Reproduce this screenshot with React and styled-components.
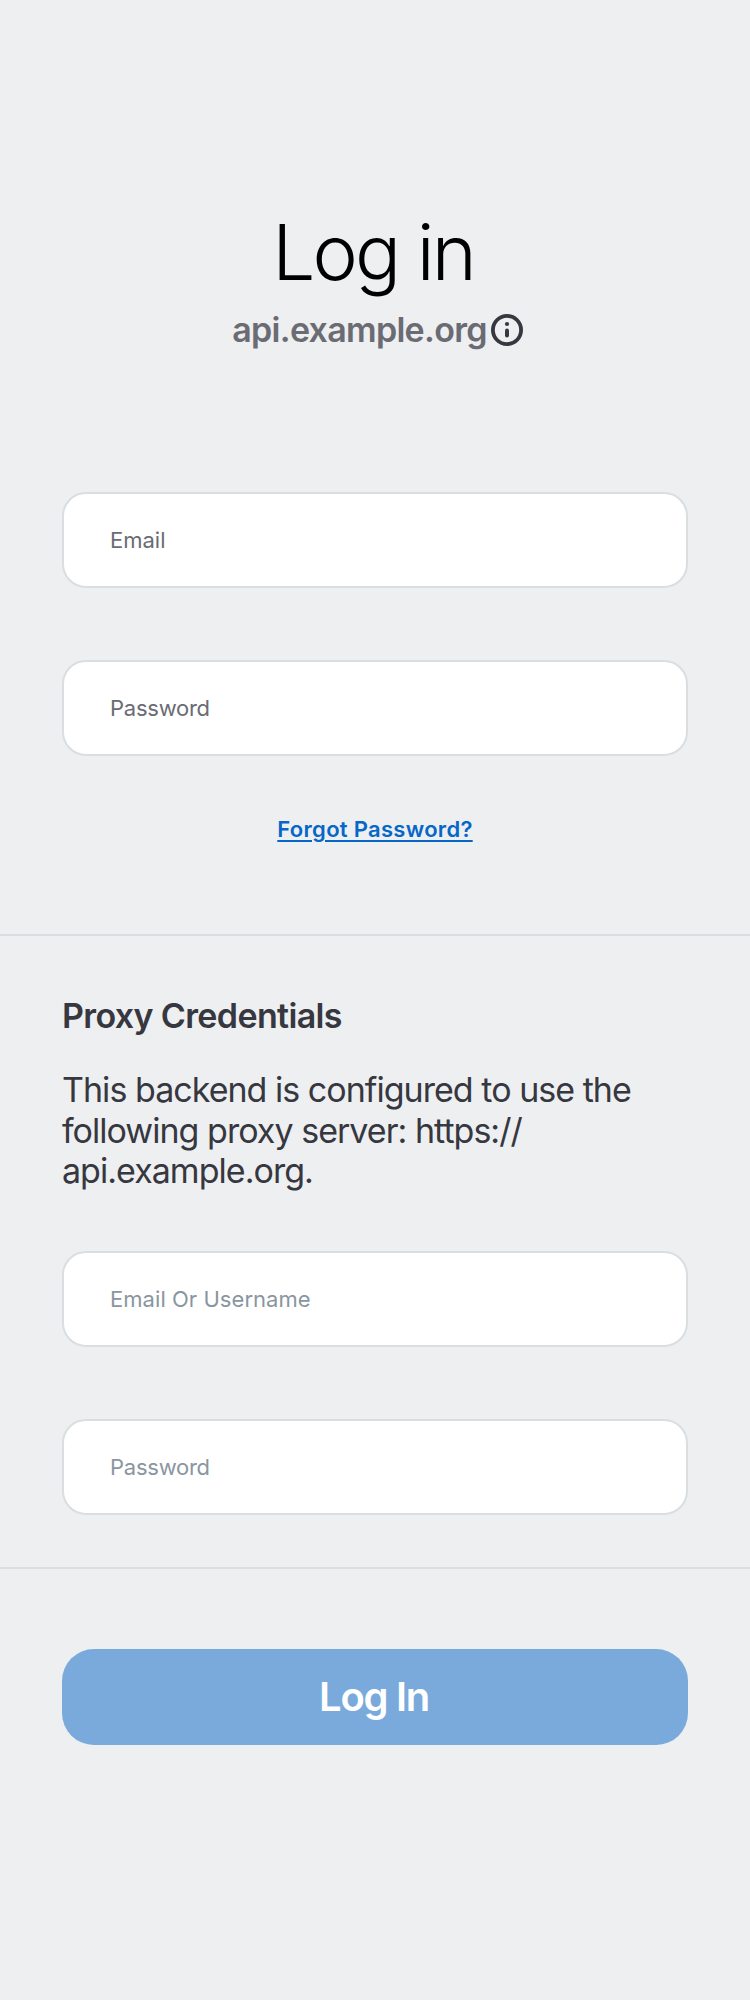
import React from "react";
import styled, { createGlobalStyle } from "styled-components";

const Global = createGlobalStyle`
  * { box-sizing: border-box; }
  body { margin: 0; background: #edeff1; font-family: Inter, "Liberation Sans", sans-serif; }
`;

const Page = styled.main`
  display: flex;
  flex-direction: column;
  height: 2000px;
  background: #edeff1;
`;
const Header = styled.header`
  display: flex;
  flex-direction: column;
  align-items: center;
  padding-top: 206px;
  height: 492px;
`;
const Title = styled.h1`
  margin: 0;
  padding-right: 4px;
  font-size: 76.5px;
  line-height: 92px;
  font-weight: 300;
  letter-spacing: -2.9px;
  color: #000;
`;
const Server = styled.div`
  display: flex;
  align-items: center;
  gap: 4px;
  height: 40px;
  margin: 12px 0 0 5px;
`;
const ServerName = styled.span`
  font-size: 34px;
  line-height: 40px;
  font-weight: 600;
  letter-spacing: -0.7px;
  color: #6a6b73;
  white-space: nowrap;
`;
const Fields = styled.section`
  display: flex;
  flex-direction: column;
  gap: 72px;
  padding: 0 62px;
`;
const Input = styled.input`
  display: block;
  width: 100%;
  height: 96px;
  padding: 0 46px;
  border: 2px solid #dadee1;
  border-radius: 24px;
  background: #fff;
  outline: none;
  font: 400 22px/28px Inter, sans-serif;
  letter-spacing: ${(p) => p.$tracking || "0"};
  &::placeholder { color: ${(p) => p.$tone}; opacity: 1; }
`;
const Forgot = styled.a`
  align-self: center;
  margin-top: 59px;
  font-size: 22px;
  line-height: 28px;
  font-weight: 600;
  letter-spacing: 0.3px;
  color: #0667c8;
  text-decoration: underline;
  text-decoration-thickness: 2px;
  text-underline-offset: 3px;
  white-space: nowrap;
`;
const Proxy = styled.section`
  margin-top: 91px;
  height: 635px;
  border-top: 2px solid #dadee0;
  border-bottom: 2px solid #dadee0;
`;
const Heading = styled.h2`
  margin: 60px 62px 0;
  font-size: 34px;
  line-height: 40px;
  font-weight: 600;
  letter-spacing: -0.63px;
  color: #36373f;
`;
const Copy = styled.p`
  margin: 34px 62px 59.5px;
  font-size: 34px;
  line-height: 40.5px;
  letter-spacing: -0.97px;
  color: #36373f;
`;
const Submit = styled.button`
  height: 96px;
  margin: 80px 62px 0;
  padding: 0 2px 0 0;
  border: 0;
  border-radius: 32px;
  background: #7aaadc;
  color: #fff;
  font: 600 40px/48px Inter, sans-serif;
  letter-spacing: -1.3px;
`;

const InfoIcon = () => (
  <svg width="32" height="32" viewBox="0 0 32 32" fill="none" stroke="#36373f">
    <circle cx="16" cy="16" r="14.1" strokeWidth="3.8" />
    <path d="M16 16.5v5" strokeWidth="4" strokeLinecap="round" />
    <circle cx="16" cy="10" r="2.1" fill="#36373f" stroke="none" />
  </svg>
);

export default function App() {
  return (
    <>
      <Global />
      <Page>
        <Header>
          <Title>Log in</Title>
          <Server>
            <ServerName>api.example.org</ServerName>
            <InfoIcon />
          </Server>
        </Header>
        <Fields>
          <Input placeholder="Email" $tone="#6a6b73" />
          <Input placeholder="Password" $tone="#6a6b73" $tracking="-0.25px" />
        </Fields>
        <Forgot>Forgot Password?</Forgot>
        <Proxy>
          <Heading>Proxy Credentials</Heading>
          <Copy>
            This backend is configured to use the<br />
            following proxy server: https://<br />
            api.example.org.
          </Copy>
          <Fields>
            <Input placeholder="Email Or Username" $tone="#8a969f" $tracking="0.05px" />
            <Input placeholder="Password" $tone="#8a969f" $tracking="-0.25px" />
          </Fields>
        </Proxy>
        <Submit>Log In</Submit>
      </Page>
    </>
  );
}
